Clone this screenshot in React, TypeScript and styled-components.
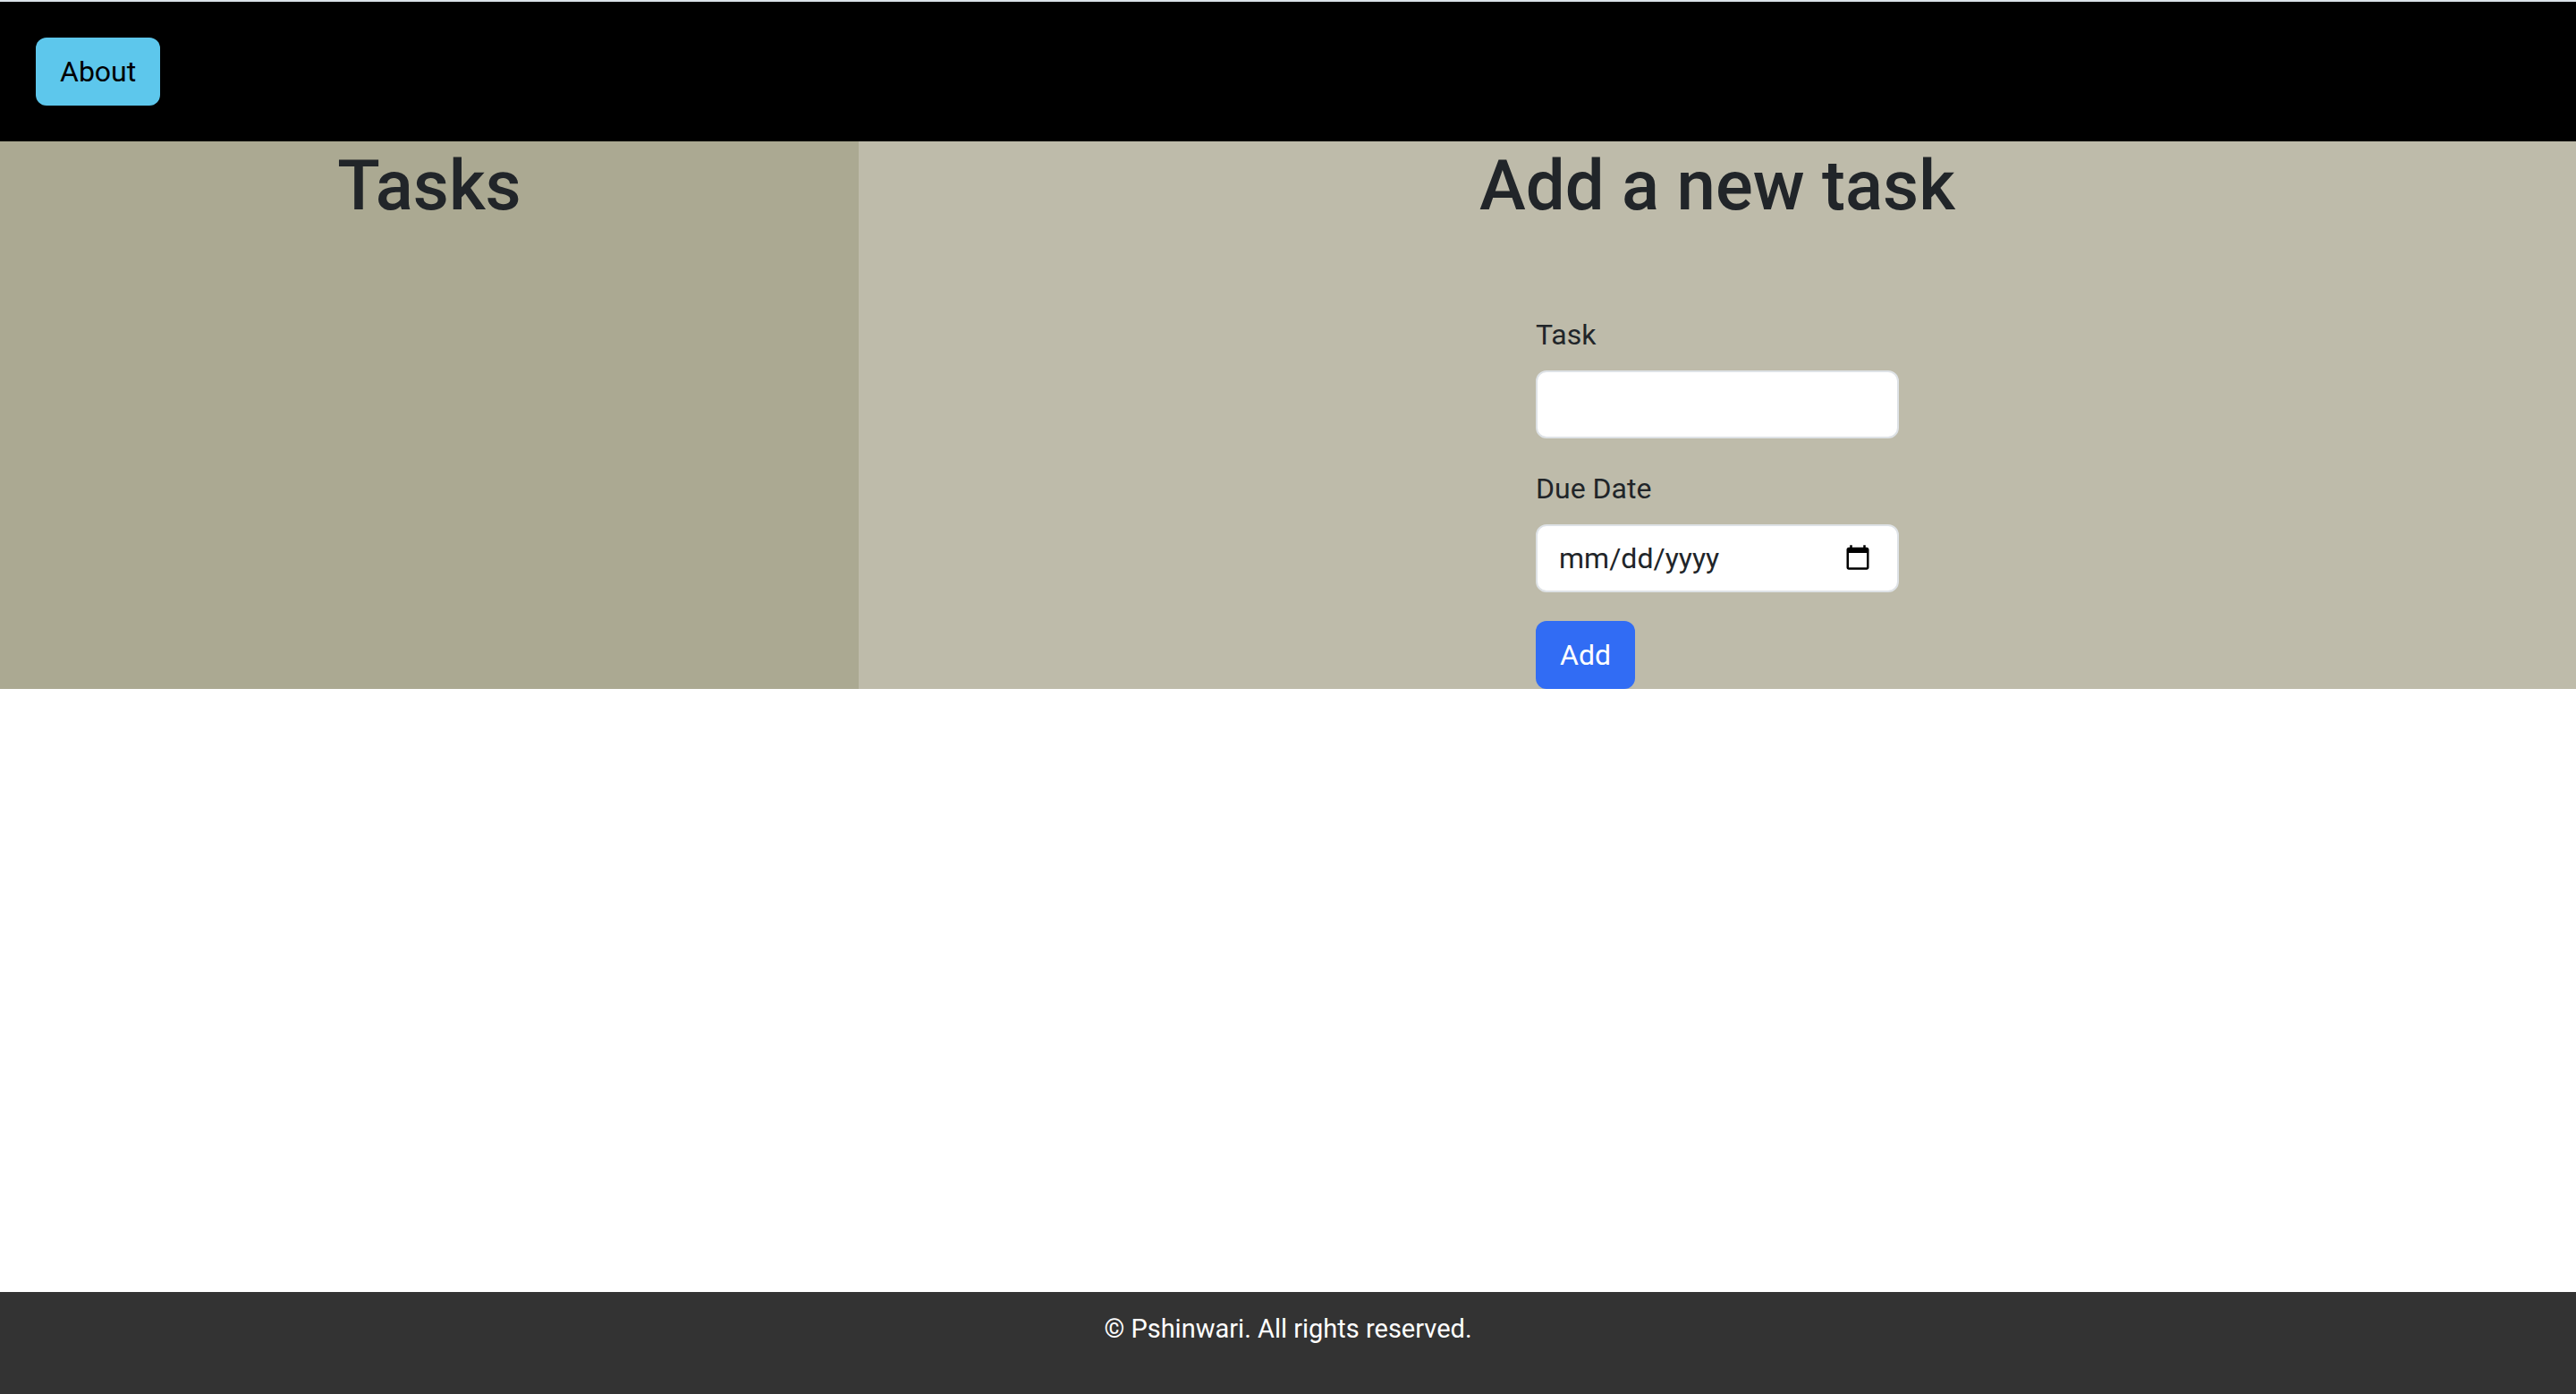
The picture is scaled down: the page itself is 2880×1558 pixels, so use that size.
import React from "react";
import styled, { createGlobalStyle } from "styled-components";

const GlobalStyle = createGlobalStyle`
  *, *::before, *::after {
    box-sizing: border-box;
  }

  body {
    margin: 0;
    background: #ffffff;
    color: #212529;
    font-family: Roboto, "Liberation Sans", sans-serif;
    font-size: 32px;
    line-height: 48px;
  }
`;

const Page = styled.div`
  display: flex;
  flex-direction: column;
  min-height: 100vh;
  border-top: 2px solid #dbe3e9;
`;

const NavBar = styled.nav`
  display: flex;
  padding: 40px;
  background: #000000;
`;

const Button = styled.button<{ $tone: "info" | "primary" }>`
  padding: 12px 25px;
  border: 2px solid transparent;
  border-radius: 12px;
  background: ${({ $tone }) => ($tone === "info" ? "#5dc7ec" : "#316cf4")};
  color: ${({ $tone }) => ($tone === "info" ? "#000000" : "#ffffff")};
  font: inherit;
  cursor: pointer;
`;

const Columns = styled.main`
  display: grid;
  grid-template-columns: 1fr 2fr;
`;

const Column = styled.section<{ $background: string }>`
  display: flex;
  flex-direction: column;
  align-items: center;
  gap: 92px;
  background: ${({ $background }) => $background};
`;

const Title = styled.h1`
  margin: 0;
  font-size: 78px;
  font-weight: 500;
  line-height: 100px;
`;

const Form = styled.form`
  display: flex;
  flex-direction: column;
  align-items: flex-start;
  gap: 32px;
  width: 406px;
`;

const Field = styled.div`
  display: flex;
  flex-direction: column;
  gap: 16px;
  width: 100%;
`;

const Input = styled.input`
  width: 100%;
  height: 76px;
  padding: 12px 26px 12px 24px;
  border: 2px solid #dee2e6;
  border-radius: 12px;
  background: #ffffff;
  color: #212529;
  font: inherit;

  &::-webkit-datetime-edit-month-field,
  &::-webkit-datetime-edit-day-field,
  &::-webkit-datetime-edit-year-field {
    padding: 0;
  }
`;

const Footer = styled.footer`
  margin-top: auto;
  padding: 20px 20px 52px;
  background: #333333;
  color: #ffffff;
  font-size: 29px;
  line-height: 42px;
  text-align: center;
`;

const FooterText = styled.p`
  margin: 0;
`;

export default function App() {
  return (
    <>
      <GlobalStyle />
      <Page>
        <NavBar>
          <Button type="button" $tone="info">
            About
          </Button>
        </NavBar>
        <Columns>
          <Column $background="#aba992">
            <Title>Tasks</Title>
          </Column>
          <Column $background="#bebbaa">
            <Title>Add a new task</Title>
            <Form onSubmit={(event) => event.preventDefault()}>
              <Field>
                <label htmlFor="task">Task</label>
                <Input id="task" type="text" />
              </Field>
              <Field>
                <label htmlFor="due-date">Due Date</label>
                <Input id="due-date" type="date" />
              </Field>
              <Button type="submit" $tone="primary">
                Add
              </Button>
            </Form>
          </Column>
        </Columns>
        <Footer>
          <FooterText>© Pshinwari. All rights reserved.</FooterText>
        </Footer>
      </Page>
    </>
  );
}
